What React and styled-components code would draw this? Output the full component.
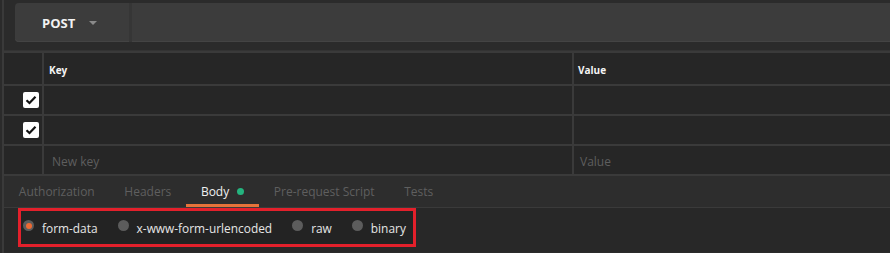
import styled, { createGlobalStyle } from "styled-components";

const GlobalStyle = createGlobalStyle`
  html, body {
    margin: 0;
    padding: 0;
    background: #2b2b2b;
    font-family: "Open Sans", "Liberation Sans", sans-serif;
  }
  * { box-sizing: border-box; }
`;

const Page = styled.div`
  width: 890px;
  height: 253px;
  overflow: hidden;
  background: #2b2b2b;
  border-left: 2px solid #3a3a3a;
  margin-left: 2px;
`;

const TopSection = styled.div`
  height: 51px;
  padding: 3px 0 0 11px;
  border-bottom: 1px solid #333;
`;

const UrlBar = styled.div`
  display: flex;
  height: 39px;
  background: #3c3c3c;
  border-radius: 4px 0 0 4px;
  box-shadow: inset 0 -1px 0 #444;
`;

const MethodButton = styled.div`
  display: flex;
  align-items: center;
  gap: 14px;
  width: 117px;
  padding-left: 27px;
  color: #f2f2f2;
  font-size: 13px;
  font-weight: 700;
  border-right: 3px solid #363636;
`;

const Caret = styled.span`
  width: 0;
  height: 0;
  border-left: 4px solid transparent;
  border-right: 4px solid transparent;
  border-top: 4px solid #8a8a8a;
`;

const UrlInput = styled.div`
  flex: 1;
`;

const Grid = styled.div`
  display: grid;
  grid-template-columns: 38px 528px 1fr;
  grid-template-rows: 31px 28px 28px 28px;
  gap: 2px;
  padding: 2px 0 2px 0;
  background: #3a3a3a;
`;

const Cell = styled.div`
  display: flex;
  align-items: center;
  background: #262626;
  padding-left: ${(p) => p.$pad || 0}px;
  justify-content: ${(p) => (p.$end ? "flex-end" : "flex-start")};
  padding-right: ${(p) => (p.$end ? 3 : 0)}px;
`;

const HeadText = styled.span`
  color: #f4f4f4;
  font-size: 10px;
  font-weight: 700;
  margin-top: 2px;
`;

const Placeholder = styled.span`
  color: #5e5e5e;
  font-size: 12px;
  margin-top: 2px;
`;

const CheckBox = styled.div`
  width: 16px;
  height: 16px;
  background: #fff;
  border-radius: 2px;
  display: flex;
  align-items: center;
  justify-content: center;
`;

const Tabs = styled.div`
  display: flex;
  height: 32px;
  background: #2d2d2d;
  border-bottom: 1px solid #3a3a3a;
`;

const Tab = styled.div`
  display: flex;
  align-items: center;
  gap: 8px;
  padding: 2px 14.8px 0;
  font-size: 12px;
  color: ${(p) => (p.$active ? "#f0f0f0" : "#5f5f5f")};
  border-bottom: 3px solid ${(p) => (p.$active ? "#e6733a" : "transparent")};
`;

const Dot = styled.span`
  width: 7px;
  height: 7px;
  border-radius: 50%;
  background: #24b37e;
`;

const BodyRow = styled.div`
  height: 44px;
  padding: 0 0 0 14px;
  background: #282828;
`;

const Options = styled.div`
  display: inline-flex;
  align-items: center;
  gap: 20px;
  height: 39px;
  padding: 0 7px 0 2px;
  border: 3px solid #e3202b;
  background: #232323;
`;

const Option = styled.label`
  display: flex;
  align-items: center;
  gap: 8px;
  color: #e6e6e6;
  font-size: 11.9px;
`;

const Radio = styled.span`
  width: 11px;
  height: 11px;
  border-radius: 50%;
  background: #5c5c5c;
  display: flex;
  align-items: center;
  justify-content: center;
  margin-top: -4px;
  &::after {
    content: "";
    width: 6px;
    height: 6px;
    border-radius: 50%;
    background: ${(p) => (p.$checked ? "#ee6a33" : "transparent")};
  }
`;

const Check = () => (
  <svg width="12" height="10" viewBox="0 0 12 10">
    <path d="M1.5 5.2 L4.5 8 L10.5 1.8" fill="none" stroke="#111" strokeWidth="2.2" />
  </svg>
);

const tabs = ["Authorization", "Headers", "Body", "Pre-request Script", "Tests"];
const bodyTypes = ["form-data", "x-www-form-urlencoded", "raw", "binary"];

export default function App() {
  return (
    <>
      <GlobalStyle />
      <Page>
        <TopSection>
          <UrlBar>
            <MethodButton>
              POST <Caret />
            </MethodButton>
            <UrlInput />
          </UrlBar>
        </TopSection>
        <Grid>
          <Cell />
          <Cell $pad={5}><HeadText>Key</HeadText></Cell>
          <Cell $pad={4}><HeadText>Value</HeadText></Cell>
          <Cell $end><CheckBox><Check /></CheckBox></Cell>
          <Cell />
          <Cell />
          <Cell $end><CheckBox><Check /></CheckBox></Cell>
          <Cell />
          <Cell />
          <Cell />
          <Cell $pad={8}><Placeholder>New key</Placeholder></Cell>
          <Cell $pad={6}><Placeholder>Value</Placeholder></Cell>
        </Grid>
        <Tabs>
          {tabs.map((t) => (
            <Tab key={t} $active={t === "Body"}>
              {t}
              {t === "Body" && <Dot />}
            </Tab>
          ))}
        </Tabs>
        <BodyRow>
          <Options>
            {bodyTypes.map((b) => (
              <Option key={b}>
                <Radio $checked={b === "form-data"} />
                {b}
              </Option>
            ))}
          </Options>
        </BodyRow>
      </Page>
    </>
  );
}
